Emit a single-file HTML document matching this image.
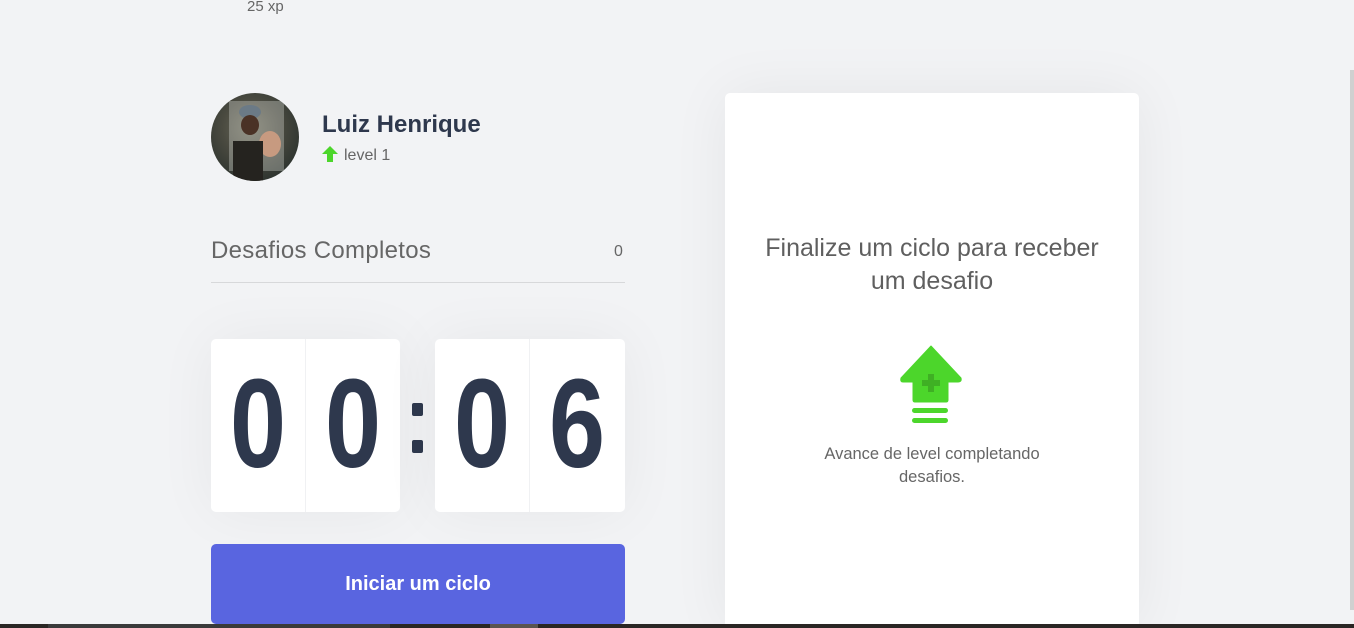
<!DOCTYPE html>
<html><head><meta charset="utf-8"><style>
*{margin:0;padding:0;box-sizing:border-box}
body{width:1354px;height:628px;overflow:hidden;background:#f2f3f5;font-family:"Liberation Sans",sans-serif;position:relative;color:#666}
.abs{position:absolute}
.card{background:#fff;border-radius:5px;box-shadow:0 0 60px rgba(0,0,0,0.05)}
.half{position:absolute;top:0;width:94px;height:173px;display:flex;align-items:center;justify-content:center;font-size:126px;font-weight:bold;color:#2e384d;}
.half span{display:inline-block;transform:scaleX(0.8);line-height:1;margin-top:-4px}
</style></head><body>
<div class="abs" style="left:247px;top:-2px;font-size:15px;color:#666">25 xp</div>

<div class="abs" style="left:211px;top:93px;width:88px;height:88px;border-radius:50%;background:radial-gradient(circle at 45% 40%,#6b6a5a 0%,#4a4a40 40%,#2f3530 75%,#8a9590 100%);overflow:hidden">
<div class="abs" style="left:18px;top:8px;width:55px;height:70px;background:#d9dcd6;opacity:.35"></div>
<div class="abs" style="left:28px;top:12px;width:22px;height:14px;background:#6b7a86;border-radius:50%"></div>
<div class="abs" style="left:30px;top:22px;width:18px;height:20px;background:#4a3226;border-radius:50%"></div>
<div class="abs" style="left:48px;top:38px;width:22px;height:26px;background:#c79a80;border-radius:50%"></div>
<div class="abs" style="left:22px;top:48px;width:30px;height:40px;background:#25231f"></div>
</div>
<div class="abs" style="left:322px;top:111px;font-size:24px;font-weight:bold;color:#2e384d">Luiz Henrique</div>
<svg class="abs" style="left:322px;top:146px" width="16" height="16" viewBox="0 0 16 16"><path d="M8 0 L16 8 L11 8 L11 16 L5 16 L5 8 L0 8 Z" fill="#4cd62b"/></svg>
<div class="abs" style="left:344px;top:147px;font-size:16px;color:#666">level 1</div>

<div class="abs" style="left:211px;top:237px;font-size:24px;letter-spacing:0.3px;color:#666">Desafios Completos</div>
<div class="abs" style="left:614px;top:243px;font-size:16px;color:#666">0</div>
<div class="abs" style="left:211px;top:282px;width:414px;height:1px;background:#d7d8da"></div>

<div class="abs card" style="left:211px;top:339px;width:189px;height:173px">
<div class="half" style="left:0"><span>0</span></div>
<div class="abs" style="left:94px;top:0;width:1px;height:173px;background:#f0f1f3"></div>
<div class="half" style="left:95px"><span>0</span></div>
</div>
<div class="abs" style="left:412px;top:403px;width:11px;height:13px;background:#2e384d;border-radius:2px"></div>
<div class="abs" style="left:412px;top:440px;width:11px;height:13px;background:#2e384d;border-radius:2px"></div>
<div class="abs card" style="left:435px;top:339px;width:190px;height:173px">
<div class="half" style="left:0"><span>0</span></div>
<div class="abs" style="left:94px;top:0;width:1px;height:173px;background:#f0f1f3"></div>
<div class="half" style="left:95px"><span>6</span></div>
</div>

<div class="abs" style="left:211px;top:544px;width:414px;height:80px;background:#5965e0;border-radius:5px;color:#fff;font-size:20px;font-weight:bold;display:flex;align-items:center;justify-content:center">Iniciar um ciclo</div>

<div class="abs card" style="left:725px;top:93px;width:414px;height:535px;box-shadow:0 0 60px rgba(0,0,0,0.06)">
<div class="abs" style="left:0;top:139px;width:414px;text-align:center;font-size:25px;line-height:33px;color:#5f5f5f">Finalize um ciclo para receber<br>um desafio</div>
<svg class="abs" style="left:175px;top:252px" width="62" height="82" viewBox="0 0 62 82"><path d="M31 1 L61 33 Q62 37 58 37 L48 37 L48 55 Q48 57 46 57 L15 57 Q13 57 13 55 L13 37 L3 37 Q0 37 1 33 Z" fill="#4cd62b" stroke="#4cd62b" stroke-linejoin="round"/><path d="M28 29h6v6h6v6h-6v6h-6v-6h-6v-6h6z" fill="#3fb024"/><rect x="12" y="63" width="36" height="5" rx="2.5" fill="#4cd62b"/><rect x="12" y="73" width="36" height="5" rx="2.5" fill="#4cd62b"/></svg>
<div class="abs" style="left:0;top:350px;width:414px;text-align:center;font-size:16.5px;line-height:23px;color:#666">Avance de level completando<br>desafios.</div>
</div>

<div class="abs" style="left:1350px;top:70px;width:4px;height:540px;background:#d0d0d0"></div>
<div class="abs" style="left:0;top:624px;width:1354px;height:4px;background:#2a2624"></div>
<div class="abs" style="left:48px;top:624px;width:342px;height:4px;background:#3a3a3a"></div>
<div class="abs" style="left:490px;top:624px;width:48px;height:4px;background:#5a5450"></div>
</body></html>
